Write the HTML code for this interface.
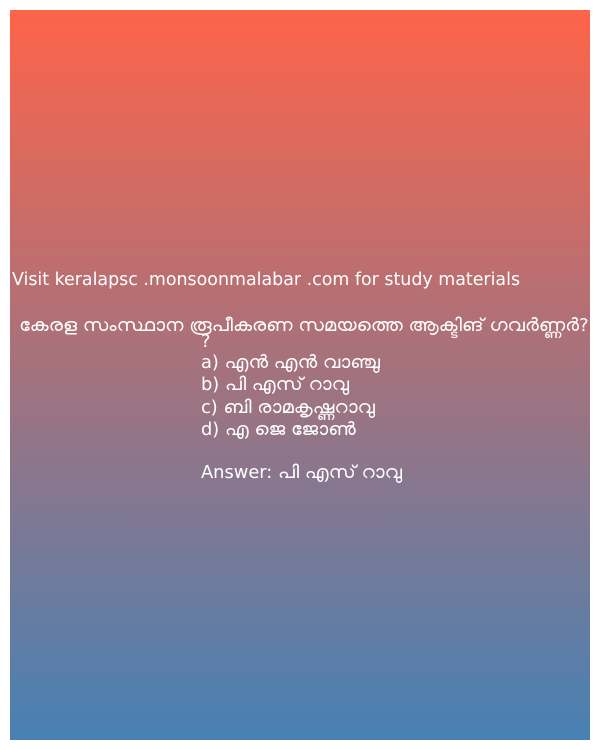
<!DOCTYPE html>
<html><head><meta charset="utf-8"><style>
html,body{margin:0;padding:0;background:#fff;width:600px;height:750px;overflow:hidden}
.box{position:absolute;left:10px;top:10px;width:580px;height:730px;background:linear-gradient(#fe6449,#4781b3)}
.t{position:absolute;color:#fff;font-family:"DejaVu Sans Condensed","DejaVu Sans","Liberation Sans",sans-serif;font-size:18px;white-space:nowrap;line-height:22px;transform-origin:left center;transform:scaleX(1.1)}
</style></head><body>
<div class="box"></div>
<div class="t" style="left:12px;top:269px;transform:scaleX(1.076)">Visit keralapsc .monsoonmalabar .com for study materials</div>
<div class="t" style="left:19px;top:315px;transform:scaleX(1.105)">കേരള സംസ്ഥാന രൂപീകരണ സമയത്തെ ആക്ടിങ് ഗവർണ്ണർ?</div>
<div class="t" style="left:201px;top:331px">?</div>
<div class="t" style="left:201px;top:352px">a) എൻ എൻ വാഞ്ചു</div>
<div class="t" style="left:201px;top:374px">b) പി എസ് റാവു</div>
<div class="t" style="left:201px;top:397px">c) ബി രാമകൃഷ്ണറാവു</div>
<div class="t" style="left:201px;top:419px">d) എ ജെ ജോൺ</div>
<div class="t" style="left:201px;top:462px">Answer: പി എസ് റാവു</div>
</body></html>
